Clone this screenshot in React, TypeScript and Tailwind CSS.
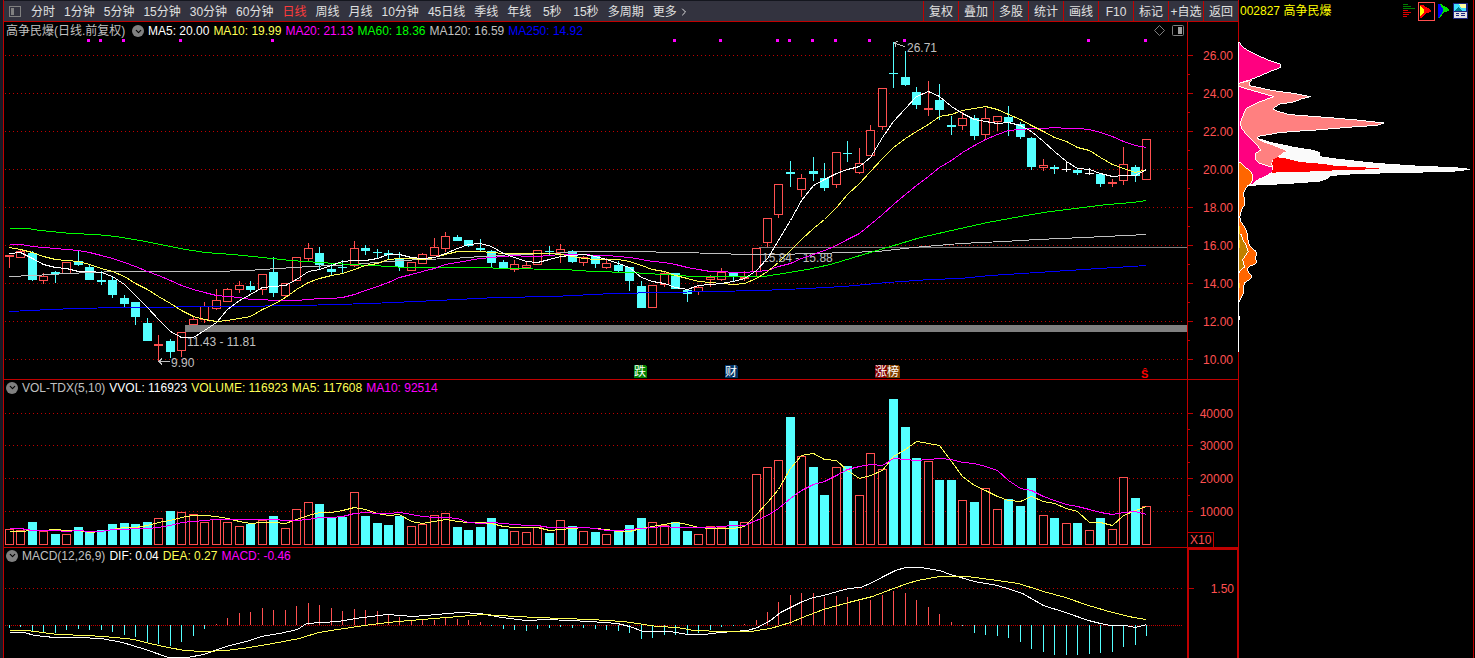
import { ReactNode } from "react";
import { ChevronDown, ChevronRight } from "lucide-react";

type Kind = "r" | "c" | "w";
type Candle = [Kind, number, number, number, number];

const UP = "#ff5050";
const DOWN = "#54ffff";
const FRAME = "#c00000";
const FONT = `"Liberation Sans", "Noto Sans CJK SC", sans-serif`;

// kind, body top, body bottom, wick top, wick bottom
const CANDLES: Candle[] = [
  ["r", 255, 257, 255, 268], ["r", 251, 258, 249, 258], ["c", 253, 280, 251, 281], ["r", 276, 281, 273, 284], ["c", 272, 274, 271, 283],
  ["r", 262, 274, 262, 274], ["c", 261, 265, 251, 266], ["c", 267, 280, 265, 280], ["c", 280, 282, 271, 285], ["c", 280, 295, 277, 298],
  ["c", 298, 304, 295, 307], ["c", 302, 317, 302, 325], ["c", 323, 341, 318, 341], ["r", 344, 346, 335, 361], ["c", 341, 352, 339, 358],
  ["r", 332, 351, 332, 357], ["r", 319, 325, 316, 325], ["r", 306, 320, 302, 323], ["r", 300, 309, 289, 310], ["r", 289, 302, 288, 302],
  ["r", 285, 290, 281, 293], ["c", 286, 290, 281, 292], ["r", 274, 290, 274, 295], ["c", 272, 293, 257, 297], ["r", 283, 296, 283, 297],
  ["r", 257, 281, 257, 281], ["r", 248, 259, 243, 261], ["c", 253, 265, 247, 269], ["c", 269, 272, 263, 275], ["c", 267, 268, 260, 274],
  ["r", 248, 266, 241, 267], ["c", 248, 251, 245, 255], ["c", 252, 253, 249, 259], ["c", 253, 255, 250, 259], ["c", 259, 267, 252, 271],
  ["r", 262, 271, 262, 271], ["r", 254, 264, 253, 264], ["r", 247, 256, 238, 256], ["r", 236, 249, 232, 252], ["c", 237, 241, 235, 241],
  ["c", 240, 246, 240, 247], ["c", 248, 250, 239, 251], ["c", 251, 263, 250, 268], ["c", 262, 268, 260, 268], ["r", 264, 270, 260, 272],
  ["r", 265, 268, 262, 269], ["r", 250, 265, 250, 265], ["c", 251, 252, 246, 255], ["r", 249, 253, 244, 263], ["c", 251, 262, 250, 263],
  ["r", 257, 263, 256, 266], ["c", 256, 264, 256, 268], ["r", 263, 268, 258, 269], ["c", 265, 271, 261, 272], ["c", 267, 281, 267, 291],
  ["c", 286, 308, 281, 308], ["r", 285, 308, 285, 308], ["r", 273, 285, 271, 287], ["c", 273, 289, 273, 289], ["c", 290, 294, 289, 302],
  ["r", 287, 292, 286, 295], ["r", 277, 280, 275, 287], ["r", 272, 280, 268, 281], ["c", 272, 276, 272, 282], ["r", 277, 279, 271, 281],
  ["r", 248, 272, 248, 277], ["r", 218, 243, 218, 247], ["r", 184, 215, 184, 218], ["c", 172, 174, 161, 187], ["r", 178, 190, 174, 197],
  ["c", 171, 174, 157, 181], ["c", 178, 188, 163, 191], ["r", 152, 185, 152, 188], ["c", 153, 154, 141, 162], ["r", 163, 173, 148, 174],
  ["r", 130, 156, 125, 156], ["r", 88, 127, 88, 130], ["c", 73, 74, 42, 88], ["c", 77, 85, 51, 86], ["c", 92, 105, 87, 109],
  ["r", 108, 110, 81, 116], ["c", 100, 110, 84, 120], ["c", 125, 127, 116, 135], ["r", 118, 126, 112, 130], ["c", 118, 136, 115, 140],
  ["r", 118, 135, 108, 139], ["r", 116, 122, 116, 131], ["c", 117, 122, 106, 136], ["c", 124, 137, 122, 139], ["c", 138, 167, 137, 170],
  ["r", 165, 168, 159, 171], ["c", 167, 169, 165, 174], ["w", 169, 170, 161, 172], ["c", 170, 173, 169, 175], ["w", 173, 174, 168, 175],
  ["c", 174, 184, 174, 187], ["r", 182, 184, 179, 187], ["r", 164, 181, 147, 185], ["c", 167, 176, 165, 182], ["r", 139, 180, 139, 180],
];

// top edge of every volume bar
const VOLUMES = [
  529, 530, 522, 531, 534, 534, 527, 532, 530, 524, 523, 524, 522, 518, 511, 512, 514, 522, 519, 522,
  526, 524, 520, 516, 528, 509, 502, 504, 518, 517, 492, 516, 523, 525, 516, 526, 524, 515, 513, 527,
  530, 527, 518, 529, 531, 532, 527, 533, 520, 526, 531, 532, 534, 531, 525, 518, 522, 525, 522, 531,
  534, 526, 527, 521, 522, 474, 467, 460, 417, 456, 467, 495, 467, 466, 495, 453, 469, 399, 427, 458,
  461, 480, 480, 500, 502, 488, 509, 499, 506, 478, 515, 518, 523, 523, 530, 518, 529, 477, 498, 506,
];

const MACD_ZERO = 625;
const MACD = [
  628, 627, 631, 633, 633, 630, 629, 630, 630, 632, 635, 637, 642, 644, 646, 642, 636, 629, 624, 618,
  613, 612, 608, 610, 610, 606, 603, 605, 608, 611, 609, 610, 611, 614, 617, 620, 620, 620, 618, 619,
  620, 622, 625, 629, 630, 631, 629, 628, 627, 628, 628, 629, 630, 631, 633, 639, 638, 635, 635, 635,
  633, 630, 627, 626, 624, 620, 612, 602, 595, 593, 593, 597, 596, 597, 601, 600, 595, 591, 593, 600,
  607, 614, 622, 626, 633, 635, 636, 638, 642, 649, 652, 655, 655, 655, 654, 653, 652, 647, 645, 636,
];

const MA60 =
  "9,228 27,228 40,230 70,233 96,234 115,236 145,241 165,245 185,249 205,252 232,254 262,257 290,260 320,262 350,264 390,266 405,267 485,267 500,268 565,269 592,271 630,272 663,274 693,276 740,276 763,276 783,273 807,269 830,264 863,254 890,246 920,237 960,228 987,222 1020,216 1043,212 1083,207 1107,204 1132,202 1146,200";
const MA120 =
  "9,276 33,275 67,273 90,272 117,271 213,271 247,270 277,268 310,266 353,264 387,261 420,259 453,258 480,256 513,254 553,253 580,251 630,251 680,252 717,253 743,254 773,254 817,253 877,251 913,247 960,243 1003,241 1037,239 1083,237 1146,234";
const MA250 =
  "9,311 50,309 75,308 120,307 230,306 300,305 370,303 437,300 497,297 553,296 613,293 663,292 760,290 807,288 843,286 887,282 930,279 960,278 990,275 1037,272 1083,269 1146,265";
const DIF =
  "9,632 24,632 34,635 54,637 78,637 101,638 122,642 145,649 168,657 187,657 203,654 226,646 249,640 261,636 279,633 297,629 306,623 337,621 362,617 387,614 413,616 436,614 459,612 480,613 501,617 526,620 547,619 590,621 617,623 629,626 643,631 670,631 687,634 703,634 720,632 733,631 747,630 757,627 770,620 780,612 802,601 813,597 823,595 837,591 848,588 860,587 872,582 883,576 895,570 905,567 920,567 939,570 950,574 974,581 997,585 1010,589 1022,593 1043,605 1065,612 1088,620 1100,623 1110,625 1125,625 1135,627 1146,624";
const DEA =
  "9,630 27,630 57,634 88,635 115,637 134,639 149,643 168,647 184,650 203,651 226,650 249,647 272,643 299,638 318,632 337,629 364,625 387,622 421,619 459,616 482,614 498,615 536,617 590,619 623,621 657,626 677,627 693,630 723,631 750,631 770,628 790,622 802,617 823,609 848,602 872,596 893,588 907,583 917,580 939,576 967,576 997,580 1018,583 1043,591 1065,597 1088,605 1112,612 1133,617 1146,619";

const barX = (i: number) => Math.round(9 + i * 11.485);

// seed holds the first values, for which there is not enough history on screen
function movingAverage(values: number[], n: number, seed: number[]) {
  return values
    .map((_, i) => {
      if (i < seed.length) return `${barX(i)},${seed[i]}`;
      const win = values.slice(i - n + 1, i + 1);
      return `${barX(i)},${Math.round(win.reduce((a, b) => a + b, 0) / n)}`;
    })
    .join(" ");
}

const closes = CANDLES.map(([kind, top, bottom]) => (kind === "r" ? top : bottom - 1));
const MA5 = movingAverage(closes, 5, [253, 252, 258, 264]);
const MA10 = movingAverage(closes, 10, [247, 249, 252, 256, 259, 260, 261, 264, 268]);
const MA20 = movingAverage(closes, 20, [244, 244, 246, 247, 248, 249, 250, 252, 255, 258, 262, 266, 271, 275, 280, 285, 289, 292, 295]);
const VMA5 = movingAverage(VOLUMES, 5, [531, 531, 530, 530]);
const VMA10 = movingAverage(VOLUMES, 10, [528, 528, 530, 530, 530, 531, 530, 531, 531]);

const PERIODS = ["分时", "1分钟", "5分钟", "15分钟", "30分钟", "60分钟", "日线", "周线", "月线", "10分钟", "45日线", "季线", "年线", "5秒", "15秒", "多周期"];
const ACTIONS = ["复权", "叠加", "多股", "统计", "画线", "F10", "标记", "+自选", "返回"];
const EVENT_DOTS = [7, 8, 10, 15, 23, 58, 62, 67, 68, 70, 72, 75, 78, 94, 99];
const BADGES = [
  { x: 634, text: "跌", fill: "#008000" },
  { x: 725, text: "财", fill: "#003366" },
  { x: 875, text: "涨", fill: "#800000" },
  { x: 887, text: "榜", fill: "#804000" },
];

function Line({ points, color }: { points: string; color: string }) {
  return <polyline points={points} transform="translate(0.5 0.5)" fill="none" stroke={color} />;
}

function Grid({ y, dense }: { y: number; dense?: boolean }) {
  return <line x1="5" x2="100%" y1={y + 0.5} y2={y + 0.5} stroke={FRAME} strokeDasharray={dense ? "1 1" : "1 3"} />;
}

function Label({ x, y, color = "#c0c0c0", end, children }: { x: number; y: number; color?: string; end?: boolean; children: ReactNode }) {
  return (
    <text x={x} y={y + 4} fill={color} textAnchor={end ? "end" : "start"} fontSize="12" fontFamily={FONT}>
      {children}
    </text>
  );
}

function Plot({ top, className, children }: { top: number; className: string; children: ReactNode }) {
  return (
    <svg className={`block w-full overflow-hidden ${className}`} shapeRendering="crispEdges">
      <g transform={`translate(-4 ${-top})`}>{children}</g>
    </svg>
  );
}

function Axis({ top, major, minor, children }: { top: number; major: [number, string][]; minor: number[]; children?: ReactNode }) {
  return (
    <svg className="block w-full h-0 min-h-full" shapeRendering="crispEdges">
      <g transform={`translate(0 ${-top})`}>
        {major.map(([y, text]) => (
          <g key={text}>
            <line x1="0" x2="5" y1={y + 0.5} y2={y + 0.5} stroke={FRAME} />
            <Label x={45} y={y + 1} color={UP} end>{text}</Label>
          </g>
        ))}
        {minor.map((y) => (
          <line key={y} x1="0" x2="2" y1={y + 0.5} y2={y + 0.5} stroke={FRAME} />
        ))}
        {children}
      </g>
    </svg>
  );
}

function Toggle({ label }: { label: string }) {
  return (
    <button aria-label={label} className="flex w-3 h-3 shrink-0 items-center justify-center rounded-full bg-[#808080] text-black">
      <ChevronDown size={9} strokeWidth={3} />
    </button>
  );
}

function CandleShape({ i }: { i: number }) {
  const [kind, top, bottom, high, low] = CANDLES[i];
  const x = barX(i);
  const color = kind === "r" ? UP : kind === "c" ? DOWN : "#ffffff";
  const hollow = kind === "r" && bottom - top > 2;
  return (
    <g fill={color}>
      <rect x={x} y={high} width="1" height={low - high} />
      {hollow ? (
        <rect x={x - 3.5} y={top + 0.5} width="8" height={bottom - top - 1} fill="#000" stroke={color} />
      ) : (
        <rect x={x - 4} y={top} width="9" height={bottom - top} />
      )}
    </g>
  );
}

function VolumeBar({ i }: { i: number }) {
  const x = barX(i);
  const y = VOLUMES[i];
  if (CANDLES[i][0] === "c") return <rect x={x - 4} y={y} width="9" height={545 - y} fill={DOWN} />;
  return <rect x={x - 3.5} y={y + 0.5} width="8" height={544 - y} fill="#000" stroke={UP} />;
}

function Toolbar() {
  return (
    <header className="flex h-[22px] border-t border-b border-t-[#14161e] border-b-[#c00000] bg-[#33333f] text-[#e0e0e0]">
      <nav className="flex flex-1 min-w-0 items-center gap-[9px] pl-[5px] pt-px overflow-hidden">
        <button aria-label="侧栏" className="mr-px">
          <svg width="12" height="11" shapeRendering="crispEdges">
            <rect x="0.5" y="0.5" width="11" height="10" rx="1" fill="none" stroke="#808080" />
            <rect x="2" y="2" width="3" height="7" fill="#808080" />
          </svg>
        </button>
        {PERIODS.map((p) => (
          <button key={p} className={`min-w-6 shrink-0 ${p === "日线" ? "text-[#ff3b3b]" : ""}`}>
            {p}
          </button>
        ))}
        <button className="flex shrink-0 items-center gap-px">
          更多
          <ChevronRight size={12} strokeWidth={2} />
        </button>
      </nav>
      {ACTIONS.map((a) => (
        <button key={a} className="w-[35px] shrink-0 border-l border-[#c00000] pt-px whitespace-nowrap">
          {a}
        </button>
      ))}
    </header>
  );
}

function PricePane() {
  const majors = Array.from({ length: 9 }, (_, k): [number, string] => [55 + k * 38, (26 - k * 2).toFixed(2)]);
  return (
    <section className="flex border-b border-[#c00000]">
      <div className="flex-1 min-w-0">
        <div className="flex h-[17px] items-center gap-1 pl-[2px] pr-[3px] pt-px whitespace-nowrap">
          <h1 className="w-[122px] text-[#c0c0c0]">高争民爆(日线.前复权)</h1>
          <Toggle label="主图指标" />
          <span className="text-white">MA5: 20.00</span>
          <span className="text-[#ffff54]">MA10: 19.99</span>
          <span className="text-[#ff00ff]">MA20: 21.13</span>
          <span className="text-[#00ff00]">MA60: 18.36</span>
          <span className="text-[#c0c0c0]">MA120: 16.59</span>
          <span className="text-[#0000ff]">MA250: 14.92</span>
          <svg className="ml-auto shrink-0" width="30" height="12" fill="none" stroke="#808080">
            <path d="M5.5 0.5L10.5 5.5L5.5 10.5L0.5 5.5Z" />
            <rect x="18.5" y="0.5" width="11" height="10" rx="1" />
            <rect x="24" y="2" width="4" height="7" fill="#a0a0a0" stroke="none" />
          </svg>
        </div>
        <Plot top={39} className="h-[340px]">
          {majors.map(([y]) => <Grid key={y} y={y} />)}
          <rect x="185" y="325" width="100%" height="7" fill="#808080" />
          <rect x="759" y="247" width="100%" height="1" fill="#808080" />
          {CANDLES.map((_, i) => <CandleShape key={i} i={i} />)}
          <Label x={187} y={342}>11.43 - 11.81</Label>
          <Label x={762} y={258}>15.84 - 15.88</Label>
          <Line points={MA250} color="#0000ff" />
          <Line points={MA120} color="#c0c0c0" />
          <Line points={MA60} color="#00ff00" />
          <Line points={MA20} color="#ff00ff" />
          <Line points={MA10} color="#ffff54" />
          <Line points={MA5} color="#ffffff" />
          {EVENT_DOTS.map((i) => (
            <rect key={i} x={barX(i) - 2} y="39" width="3" height="3" fill="#ff00ff" />
          ))}
          <path d="M170 361.5H159M162 358.5L159 361.5L162 364.5" fill="none" stroke="#c0c0c0" />
          <Label x={171} y={363}>9.90</Label>
          <path d="M905 46.5L895 43.5M898 41.5L894.5 42.5L896 46.5" fill="none" stroke="#c0c0c0" />
          <Label x={907} y={48}>26.71</Label>
          {BADGES.map((b) => (
            <g key={b.text}>
              <path d={`M${b.x} 365h11l2 2v11h-13z`} fill={b.fill} />
              <Label x={b.x} y={372} color="#ffffff">{b.text}</Label>
            </g>
          ))}
          <text x="1141" y="378" fill="#ff0000" fontSize="11" fontWeight="bold" fontFamily={FONT}>Ŝ</text>
        </Plot>
      </div>
      <div className="w-[51px] shrink-0 border-l border-[#c00000]">
        <Axis top={22} major={majors} minor={Array.from({ length: 8 }, (_, k) => 74 + k * 38)} />
      </div>
    </section>
  );
}

function VolumePane() {
  const majors: [number, string][] = [[413, "40000"], [445, "30000"], [478, "20000"], [511, "10000"]];
  return (
    <section className="flex border-b border-[#c00000]">
      <div className="flex-1 min-w-0">
        <div className="flex h-[17px] items-center gap-1 pl-[2px] pb-[2px] whitespace-nowrap">
          <Toggle label="成交量指标" />
          <h2 className="text-[#c0c0c0]">VOL-TDX(5,10)</h2>
          <span className="text-white">VVOL: 116923</span>
          <span className="text-[#ffff54]">VOLUME: 116923</span>
          <span className="text-[#ffff54]">MA5: 117608</span>
          <span className="text-[#ff00ff]">MA10: 92514</span>
        </div>
        <Plot top={397} className="h-[150px]">
          {majors.map(([y]) => <Grid key={y} y={y} />)}
          {VOLUMES.map((_, i) => <VolumeBar key={i} i={i} />)}
          <Line points={VMA5} color="#ffff54" />
          <Line points={VMA10} color="#ff00ff" />
        </Plot>
      </div>
      <div className="w-[51px] shrink-0 border-l border-[#c00000]">
        <Axis top={380} major={majors} minor={[429, 462, 495]}>
          <path d="M0 532.5H25.5V547" fill="none" stroke={FRAME} />
          <Label x={2} y={540} color={UP}>X10</Label>
        </Axis>
      </div>
    </section>
  );
}

function MacdPane() {
  return (
    <section className="flex flex-1">
      <div className="flex flex-1 min-w-0 flex-col">
        <div className="flex h-[17px] items-center gap-1 pl-[2px] pb-[2px] whitespace-nowrap">
          <Toggle label="MACD指标" />
          <h2 className="text-[#c0c0c0]">MACD(12,26,9)</h2>
          <span className="text-white">DIF: 0.04</span>
          <span className="text-[#ffff54]">DEA: 0.27</span>
          <span className="text-[#ff00ff]">MACD: -0.46</span>
        </div>
        <Plot top={565} className="h-[93px] grow">
          <Grid y={588} />
          <Grid y={MACD_ZERO} dense />
          {MACD.map((y, i) => (
            <rect
              key={i}
              x={barX(i)}
              y={Math.min(y, MACD_ZERO)}
              width="1"
              height={Math.max(Math.abs(y - MACD_ZERO), 1)}
              fill={y < MACD_ZERO ? UP : DOWN}
            />
          ))}
          <Line points={DIF} color="#ffffff" />
          <Line points={DEA} color="#ffff54" />
        </Plot>
      </div>
      <div className="w-[51px] shrink-0 border-l-2 border-t-2 border-r border-[#c00000]">
        <Axis top={550} major={[[588, "1.50"]]} minor={[]} />
      </div>
    </section>
  );
}

function ProfileIcons() {
  return (
    <div className="flex items-center gap-[3px] mr-[5px]">
      <button aria-label="筹码分布">
        <svg width="12" height="14" shapeRendering="crispEdges">
          <path d="M0 0.5h5M0 2.5h8M0 4.5h12" stroke="#008000" />
          <path d="M0 6.5h5M0 8.5h8M0 10.5h6M0 12.5h4" stroke="#e00000" />
        </svg>
      </button>
      <button aria-label="远期成本" className="flex w-[17px] h-[19px] items-center border border-[#ff5050]">
        <svg width="15" height="15" shapeRendering="crispEdges">
          <path d="M1 1H4L12 6V8L7 9L3 14H1Z" fill="#ff0000" />
          <path d="M1 2L5 6V8L1 13Z" fill="#ffff00" />
        </svg>
      </button>
      <button aria-label="近期成本">
        <svg width="12" height="14" shapeRendering="crispEdges">
          <path d="M0 0H3L11 5V7L6 8L2 14H0L3 7Z" fill="#00e000" />
          <path d="M0 0H2L5 5V7L1 14H0Z" fill="#0000ff" />
        </svg>
      </button>
      <button aria-label="设置">
        <svg width="15" height="16" shapeRendering="crispEdges">
          <rect width="15" height="16" fill="#1a237e" />
          <rect x="1" y="1" width="12" height="7" fill="#40e0ff" />
          <path d="M6 1h7v4h-5z" fill="#ffffa0" />
          <path d="M1 8l4-4 4 4z" fill="#008090" />
          <rect x="1" y="9" width="13" height="6" fill="#e0e0e0" />
          <path d="M3 10.5h3M8 10.5h4M3 12.5h3M8 12.5h4" stroke="#1a237e" />
        </svg>
      </button>
    </div>
  );
}

function ChipProfile() {
  return (
    <svg className="block w-full h-[360px] overflow-visible" shapeRendering="crispEdges">
      <g transform="translate(-49 8) scale(0.33333)" stroke="#ffffff" strokeWidth="3">
        <path
          fill="#fafafa"
          d="M202 325L240 337L285 346L310 352L370 361L388 367V380L430 386L500 394L570 401L690 409L795 413L840 418L795 423L740 425L620 428L520 430L460 433L420 437L415 443L405 448L390 453L330 458L245 463L175 466L160 420Z"
        />
        <path
          fill="#ff8080"
          d="M146 160L175 153L187 147L178 158V167L250 182L310 190L362 200L340 205L310 216L270 222L248 236L262 244L300 254L380 260L430 264L500 270L583 279L560 286L500 290L450 294L380 300L300 305L262 309L205 319L200 325L215 333L240 342L270 354L295 364L280 369L262 383L248 390L245 402L250 412L200 400L150 300Z"
        />
        <path fill="#ff0080" d="M147 36L155 47L170 60L200 75L240 92L270 102L274 112L240 124L215 136L185 148L147 160Z" />
        <path
          fill="#ff0080"
          d="M147 169L165 175L210 188L252 200L235 206L205 217L170 234L155 265L151 280L155 297L172 315L190 333L205 350L212 360L198 370L195 385L205 398L230 407L250 412L245 428L225 440L205 448L187 463H147Z"
        />
        <path
          fill="#ff0000"
          stroke="none"
          d="M248 390L262 382L290 386L330 396L400 402L440 408L520 412L575 415L520 419L410 422L350 425H262L258 429H245L250 412L247 402Z"
        />
        <path
          fill="#ff6600"
          d="M147 395L165 410L185 428L188 440L185 458L172 468L165 480L160 490L162 500L165 510L163 525L155 540L152 550L149 560L153 575L160 585L168 600L174 615V630L178 645L185 655L197 663L200 675L195 685L200 695L195 703L180 708L172 715L175 727L187 738L180 748L165 757L160 770V790L152 805L147 817Z"
        />
        <path fill="#c08000" d="M147 610L155 615L158 630L165 640L172 655L175 665L165 678L158 690L162 705L165 710L152 720L147 730Z" />
        <path stroke="#ffc000" d="M150 588V612M150 630V655M150 760V775" />
        <path fill="none" d="M146.5 36V965M149 857V870" />
      </g>
    </svg>
  );
}

export default function App() {
  return (
    <div className="flex min-h-screen bg-black text-[12px] leading-4 font-['Liberation_Sans','Noto_Sans_CJK_SC',sans-serif]">
      <div className="w-[3px] shrink-0 bg-[#181a26]" />
      <main className="flex flex-1 min-w-0 flex-col border-l border-[#c00000]">
        <Toolbar />
        <PricePane />
        <VolumePane />
        <MacdPane />
      </main>
      <aside className="flex w-[237px] shrink-0 border-l border-[#c00000]">
        <div className="flex flex-1 flex-col border-r border-[#c00000] mr-px">
          <div className="flex h-[22px] items-center justify-between pl-px text-[#ffff00] whitespace-nowrap">
            <span>002827 高争民爆</span>
            <ProfileIcons />
          </div>
          <ChipProfile />
        </div>
      </aside>
    </div>
  );
}
